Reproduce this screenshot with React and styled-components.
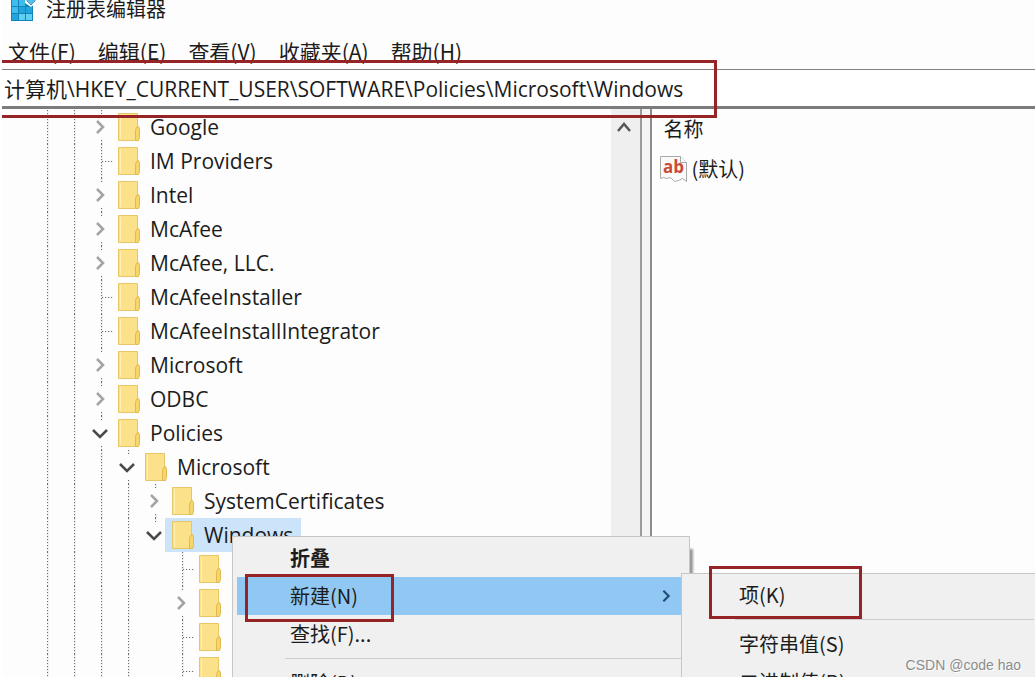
import React from "react";
import styled, { createGlobalStyle, css } from "styled-components";

const GlobalStyle = createGlobalStyle`
  * {
    box-sizing: border-box;
  }
  body {
    margin: 0;
    background: #fff;
    overflow: hidden;
  }
  button,
  input {
    margin: 0;
    padding: 0;
    border: 0;
    background: none;
    color: inherit;
    font: inherit;
    text-align: left;
  }
`;

const Window = styled.div`
  position: relative;
  display: flex;
  flex-direction: column;
  height: 100vh;
  border-left: 2px solid #fff;
  border-bottom: 3px solid #fff;
  overflow: hidden;
  color: #1c1c1c;
  background: #fdfdfd;
  font-family: "Open Sans", "Noto Sans CJK SC", sans-serif;
  font-size: 21px;
  line-height: 24px;
`;

const TitleBar = styled.header`
  display: flex;
  align-items: center;
  gap: 10px;
  height: 18px;
  flex: none;
  padding-left: 8px;
  font-family: "Noto Sans CJK SC", sans-serif;
`;

const Title = styled.span`
  font-size: 20px;
`;

const MenuBar = styled.nav`
  display: flex;
  flex: none;
  align-items: flex-end;
  gap: 22px;
  height: 51px;
  padding: 0 6px 6px;
  font-family: "Noto Sans CJK SC", sans-serif;
`;

const MenuButton = styled.button`
  white-space: nowrap;
`;

const AddressBar = styled.div`
  position: relative;
  z-index: 1;
  flex: none;
  height: 40px;
  border-top: 1px solid #828282;
  border-bottom: 3px solid #7c7c7c;
  background: #fff;
`;

const AddressInput = styled.input`
  width: 100%;
  height: 36px;
  padding-left: 2px;
  outline: none;
`;

const Marker = styled.div`
  position: absolute;
  z-index: 3;
  border: 3px solid #962427;
  pointer-events: none;
`;

const AddressMarker = styled(Marker)`
  top: -10px;
  left: -3px;
  width: 718px;
  height: 58px;
`;

const ItemMarker = styled(Marker)`
  top: -3px;
  left: 8px;
  width: 149px;
  height: 48px;
`;

const KeyMarker = styled(Marker)`
  top: -10px;
  left: 27px;
  width: 153px;
  height: 53px;
`;

const Workspace = styled.main`
  display: flex;
  flex: 1;
  min-height: 0;
`;

const TreePane = styled.section`
  display: flex;
  flex: 0 0 62%;
  overflow: hidden;
  border-right: 2px solid #9a9a9a;
`;

const Tree = styled.ul`
  flex: 1;
  margin: 0;
  padding: 1px 0 0 32px;
  list-style: none;
`;

const Row = styled.li`
  display: flex;
  height: 34px;
`;

const dots = css`
  background-image: repeating-linear-gradient(
    ${(props) => (props.$across ? "to right" : "to bottom")},
    #6a6a6a 0 1px,
    #e4e4e4 1px 2px,
    transparent 2px 3px
  );
`;

const Cell = styled.span`
  display: flex;
  flex: none;
  position: relative;
  align-items: center;
  justify-content: center;
  width: 27px;
`;

const Line = styled.span`
  width: 1px;
  height: 100%;
  box-shadow: 1px 0 0 #f0f0f0;
  ${dots}
`;

const Branch = styled.span`
  position: absolute;
  top: 17px;
  left: 14px;
  width: 12px;
  height: 1px;
  ${dots}
`;

const Toggle = styled.button`
  position: absolute;
  top: 4px;
  left: 2px;
  display: flex;
  align-items: center;
  justify-content: center;
  width: 19px;
  height: ${(props) => (props.$last ? "30px" : "26px")};
  padding-bottom: ${(props) => (props.$last ? "4px" : "0")};
  background: #fdfdfd;
`;

const Entry = styled.span`
  display: flex;
  align-items: center;
  gap: 10px;
  padding: 0 6px 0 3px;
  white-space: nowrap;
`;

const SelectedEntry = styled(Entry)`
  margin-left: -4px;
  padding: 0 8px 0 7px;
  background: #cce4fa;
`;

const ScrollBar = styled.div`
  flex: 0 0 29px;
  display: flex;
  justify-content: center;
  align-items: flex-start;
  background: #efefef;
`;

const ScrollUp = styled.button`
  display: flex;
  justify-content: center;
  width: 29px;
  padding: 10px 4px 4px 0;
`;

const Splitter = styled.div`
  flex: 0 0 8px;
  background: #f4f4f4;
`;

const ValuePane = styled.section`
  flex: 1;
  border-left: 2px solid #8c8c8c;
  font-family: "Noto Sans CJK SC", sans-serif;
  font-size: 20px;
`;

const ValueTable = styled.table`
  width: 100%;
  border-collapse: collapse;

  th,
  td {
    height: 40px;
    padding: 0 0 0 11px;
    font-weight: 400;
    text-align: left;
  }
  td {
    padding-left: 8px;
  }
`;

const ValueName = styled.span`
  display: flex;
  align-items: center;
  gap: 4px;
`;

const Menu = styled.div`
  position: absolute;
  z-index: 2;
  display: flex;
  flex-direction: column;
  padding: 2px 0;
  border: 1px solid #c6c6c6;
  background: #f0f0f0;
  font-family: "Noto Sans CJK SC", sans-serif;
  font-size: 20px;
`;

const ContextMenu = styled(Menu)`
  top: 536px;
  left: 230px;
  width: 458px;
  padding-left: 4px;
  box-shadow: 4px 12px 2px -1px #999;
`;

const SubMenu = styled(Menu)`
  top: 573px;
  left: 679px;
  right: -4px;
`;

const MenuItem = styled.div`
  position: relative;
  flex: none;
  height: 38px;
  background: ${(props) => (props.$active ? "#91c8f3" : "transparent")};
`;

const ItemButton = styled.button`
  display: flex;
  align-items: center;
  justify-content: space-between;
  width: 100%;
  height: 100%;
  padding: 0 16px 0 ${(props) => props.$indent};
  font-weight: ${(props) => (props.$bold ? 700 : 400)};
`;

const Separator = styled.hr`
  flex: none;
  width: auto;
  height: 1px;
  margin: 5px 4px 5px ${(props) => props.$indent};
  border: 0;
  background: #cdcdcd;
`;

const Watermark = styled.span`
  position: absolute;
  z-index: 3;
  right: 14px;
  bottom: 0;
  color: #8c8c8c;
  font-family: "Liberation Sans", sans-serif;
  font-size: 14px;
  text-shadow: 1px 1px 0 #fff;
`;

const Arrow = ({ dir, color = "#9a9a9a", size = 16 }) => {
  const paths = {
    right: "M5 2 L11 8 L5 14",
    down: "M1 5 L8 12 L15 5",
    up: "M2 12 L8 5 L14 12",
  };
  return (
    <svg width={size} height={size} viewBox="0 0 16 16" aria-hidden="true">
      <path d={paths[dir]} fill="none" stroke={color} strokeWidth="2.5" />
    </svg>
  );
};

const Folder = () => (
  <svg width="22" height="28" viewBox="0 0 22 28" aria-hidden="true">
    <path d="M.5 .5h19v27h-19z" fill="#fbe28a" stroke="#e6c766" />
    <path d="M18.5 14.5l2 -1l1 2v9l-1 3h-3v-10z" fill="#f8d568" stroke="#dfba50" />
    <path d="M2 2h1v24h-1z" fill="#fff0b5" />
  </svg>
);

const RegistryIcon = () => (
  <svg width="26" height="32" viewBox="0 0 26 32" aria-hidden="true">
    <path d="M1 5h22v23h-22z" fill="#1583bb" />
    <path d="M2 7h6v6h-6zM9 7h6v6h-6zM2 14h6v6h-6z" fill="#3cbdec" />
    <path d="M9 14h6v6h-6zM16 14h6v6h-6zM2 21h6v6h-6z" fill="#22a4dc" />
    <path d="M9 21h6v6h-6zM16 21h6v6h-6z" fill="#5fd0f2" />
    <path d="M15 3h11v7l-5 4l-6 -4z" fill="#fdfdfd" />
    <path d="M17 5h8v3l-4 4l-4 -4z" fill="#56c0e8" stroke="#4a9cc4" />
  </svg>
);

const StringIcon = () => (
  <svg width="27" height="28" viewBox="0 0 27 28" aria-hidden="true">
    <path
      d="M.5 1.5h20l6 6v19l-4 -3l-4 2l-4 1l-4 -4l-4 1l-3 -1l-3 1z"
      fill="#fafafa"
      stroke="#a9a9a9"
    />
    <path d="M20.5 1.5v6h6" fill="#fff" stroke="#a9a9a9" />
    <text
      x="3"
      y="18"
      fill="#cc4a35"
      fontFamily="Open Sans, sans-serif"
      fontSize="17"
      fontWeight="700"
    >
      ab
    </text>
  </svg>
);

// guides: one flag per indent level, true where the ancestor line goes on
const two = [true, true];
const four = [true, true, true, true];
const keys = [
  { name: "Google", guides: two, state: "right" },
  { name: "IM Providers", guides: two },
  { name: "Intel", guides: two, state: "right" },
  { name: "McAfee", guides: two, state: "right" },
  { name: "McAfee, LLC.", guides: two, state: "right" },
  { name: "McAfeeInstaller", guides: two },
  { name: "McAfeeInstallIntegrator", guides: two },
  { name: "Microsoft", guides: two, state: "right" },
  { name: "ODBC", guides: two, state: "right" },
  { name: "Policies", guides: two, state: "down" },
  { name: "Microsoft", guides: [...two, true], state: "down" },
  { name: "SystemCertificates", guides: four, state: "right" },
  { name: "Windows", guides: four, state: "down", last: true, selected: true },
  { guides: [...four, false] },
  { guides: [...four, false], state: "right" },
  { guides: [...four, false] },
  { guides: [...four, false] },
];

const menus = ["文件(F)", "编辑(E)", "查看(V)", "收藏夹(A)", "帮助(H)"];

const TreeRow = ({ item }) => {
  const Wrapper = item.selected ? SelectedEntry : Entry;
  return (
    <Row>
      {item.guides.map((on, index) => (
        <Cell key={index}>{on && <Line />}</Cell>
      ))}
      <Cell>
        <Line />
        {item.state ? (
          <Toggle $last={item.last} aria-label={`Toggle ${item.name || "key"}`}>
            <Arrow
              dir={item.state}
              color={item.state === "down" ? "#4a4a4a" : "#a3a3a3"}
            />
          </Toggle>
        ) : (
          <Branch $across />
        )}
      </Cell>
      <Wrapper>
        <Folder />
        {item.name}
      </Wrapper>
    </Row>
  );
};

const App = () => (
  <>
    <GlobalStyle />
    <Window>
      <TitleBar>
        <RegistryIcon />
        <Title>注册表编辑器</Title>
      </TitleBar>
      <MenuBar>
        {menus.map((menu) => (
          <MenuButton key={menu}>{menu}</MenuButton>
        ))}
      </MenuBar>
      <AddressBar>
        <AddressInput
          aria-label="Address"
          defaultValue="计算机\HKEY_CURRENT_USER\SOFTWARE\Policies\Microsoft\Windows"
        />
        <AddressMarker />
      </AddressBar>
      <Workspace>
        <TreePane>
          <Tree>
            {keys.map((item, index) => (
              <TreeRow key={index} item={item} />
            ))}
          </Tree>
          <ScrollBar>
            <ScrollUp aria-label="Scroll up">
              <Arrow dir="up" color="#555" />
            </ScrollUp>
          </ScrollBar>
        </TreePane>
        <Splitter />
        <ValuePane>
          <ValueTable>
            <thead>
              <tr>
                <th>名称</th>
              </tr>
            </thead>
            <tbody>
              <tr>
                <td>
                  <ValueName>
                    <StringIcon />
                    (默认)
                  </ValueName>
                </td>
              </tr>
            </tbody>
          </ValueTable>
        </ValuePane>
      </Workspace>
      <ContextMenu>
        <MenuItem>
          <ItemButton $indent="53px" $bold>
            折叠
          </ItemButton>
        </MenuItem>
        <MenuItem $active>
          <ItemButton $indent="53px">
            新建(N)
            <Arrow dir="right" color="#1f4e79" size={14} />
          </ItemButton>
          <ItemMarker />
        </MenuItem>
        <MenuItem>
          <ItemButton $indent="53px">查找(F)...</ItemButton>
        </MenuItem>
        <Separator $indent="48px" />
        <MenuItem>
          <ItemButton $indent="53px">删除(D)</ItemButton>
        </MenuItem>
      </ContextMenu>
      <SubMenu>
        <MenuItem>
          <ItemButton $indent="57px">项(K)</ItemButton>
          <KeyMarker />
        </MenuItem>
        <Separator $indent="53px" />
        <MenuItem>
          <ItemButton $indent="57px">字符串值(S)</ItemButton>
        </MenuItem>
        <MenuItem>
          <ItemButton $indent="57px">二进制值(B)</ItemButton>
        </MenuItem>
      </SubMenu>
      <Watermark>CSDN @code hao</Watermark>
    </Window>
  </>
);

export default App;
